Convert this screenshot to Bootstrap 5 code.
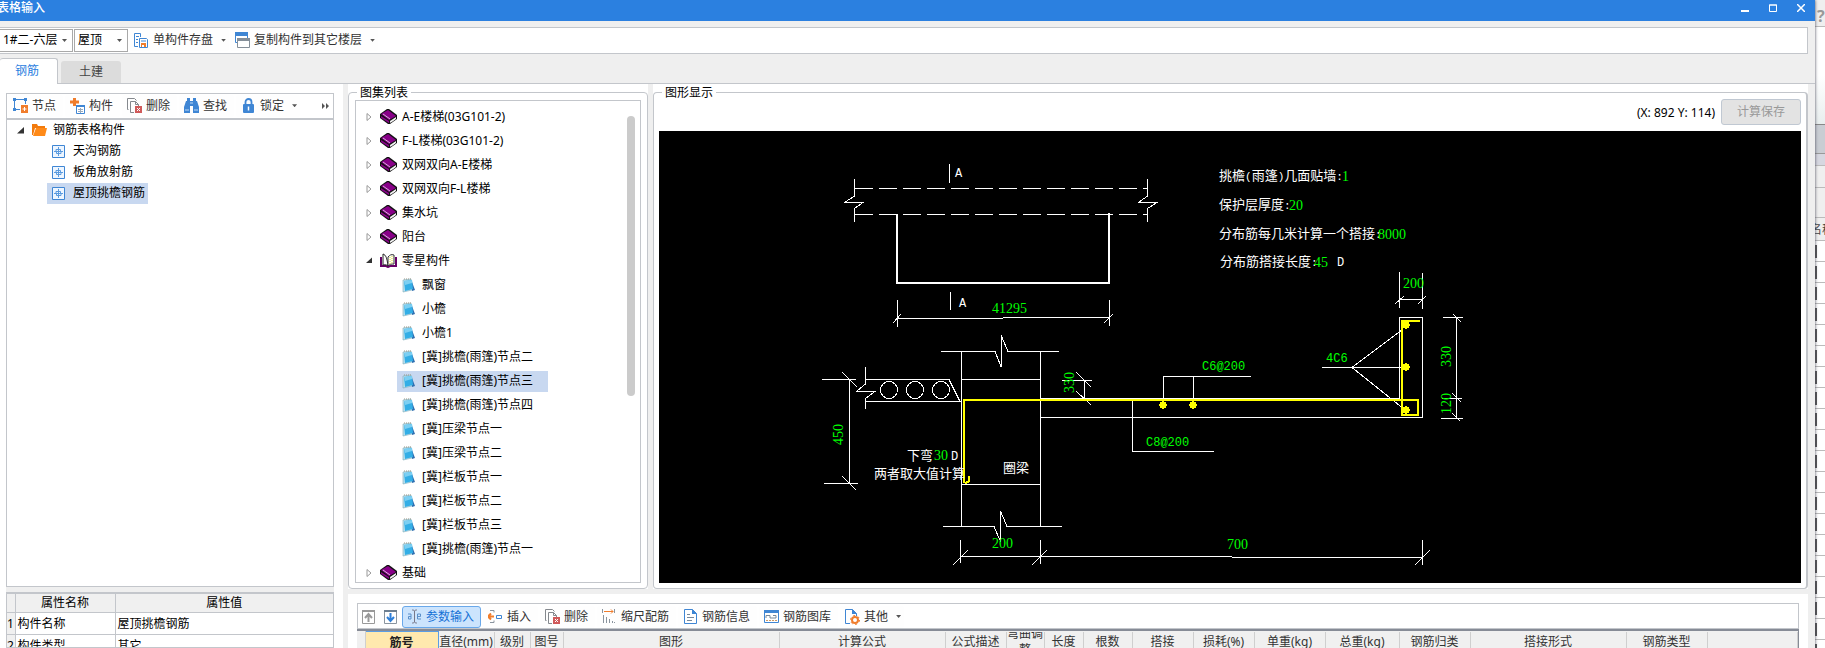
<!DOCTYPE html>
<html lang="zh-CN">
<head>
<meta charset="utf-8">
<meta name="viewport" content="width=device-width, initial-scale=1">
<title>表格输入</title>
<link href="https://cdn.jsdelivr.net/npm/bootstrap@5.3.0/dist/css/bootstrap.min.css" rel="stylesheet">
<style>
:root{--line:#c3c6cb;--face:#efefef;--blue:#2b80e0}
body{height:100vh;overflow:hidden;background:var(--face);color:#000;font:12px/18px "Noto Sans","Noto Sans CJK SC",sans-serif}
svg{display:block;flex:none}
.app-window{background:var(--face);box-shadow:0 0 3px #445;z-index:1}
.title-bar{height:21px;background:var(--blue);color:#fff}
.title-bar h1{font-size:12px;line-height:16px;margin:0 0 0 -3px}
.title-bar button{border:0;background:none;padding:0;width:28px;height:15px;color:#fff}
.tool-strip{height:26px;background:#fff;border:1px solid var(--line)}
.main-strip{height:27px;margin:6px 7px 0 0;border-left:0;gap:1px}
.main-strip select{appearance:none;height:23px;border:1px solid #a9a9a9;background:#fff url("data:image/svg+xml,%3Csvg xmlns='http://www.w3.org/2000/svg' width='5' height='3'%3E%3Cpath fill='%23555' d='M0 0h5L2.500 3z'/%3E%3C/svg%3E") no-repeat right 5px center;padding:0 0 0 3px;font:inherit;color:#000;border-radius:0}
.sel-floor{width:73px;border-left:0!important}.sel-part{width:54px}
.tool-btn{display:flex;align-items:center;gap:4px;height:22px;padding:0 7px 0 5px;border:0;border-radius:3px;background:#fefefe;color:#333;white-space:nowrap}
.tool-btn.has-menu{padding-right:3px}
.tool-btn.is-on{background:#cce4fd;border:1px solid #69a8ea;color:#1672d6;padding:0 6px 0 4px}
.tool-btn.icon-only{width:20px;padding:0;justify-content:center}
.caret{width:5px;height:3px;margin-left:4px;background:#555;clip-path:polygon(0 0,100% 0,50% 100%)}
.tab-row{height:30px;padding-top:4px}
.tab-row button{border:0;border-radius:3px 3px 0 0;font-size:12px}
.tab-on{width:58px;height:26px;background:#fff;color:var(--blue);border-top:1px solid var(--line)!important;border-right:1px solid var(--line)!important;padding:0 3px 0 0}
.tab-off{width:60px;height:22px;margin:3px 0 0 3px;background:#dcdcdc;color:#444;padding:0}
.tab-edge{border-bottom:1px solid var(--line)}
.work{background:#fff;margin-right:7px}
.side{width:343px;padding:9px 9px 0 6px;flex:none}
.side-bar{height:25px;gap:2px;padding-left:1px;border-bottom:0}
.side-tree{border:1px solid var(--line);border-top:2px solid var(--line)}
.tree{list-style:none;margin:0;padding:0}
.tree-row{display:flex;align-items:center;white-space:nowrap}
.side-tree .tree-row{height:21px}
.side-tree .root{padding-left:10px}
.side-tree .leaf{margin-left:40px;width:101px;padding-left:5px;gap:8px}
.picked{background:#c8d8f0}
.bar-h{height:5px;background:var(--face);flex:none}
.bar-v{width:5px;background:var(--face);flex:none}
.props{height:56px;overflow:hidden;border:1px solid var(--line);border-top-width:2px}
.props table,.grid-head table{table-layout:fixed;width:100%;border-collapse:collapse}
.props th,.props td{height:22px;padding:0 2px;border:1px solid var(--line);border-top:0;border-left:0;white-space:nowrap;line-height:18px;font-weight:400}
.props thead th{height:18px;background:#f0f0f0;text-align:center;line-height:18px}
.props tbody th{background:#f0f0f0;padding:0}
.props td:last-child,.props th:last-child{border-right:0}
.groups{background:var(--face);gap:5px;padding-bottom:5px}
.group-cell{background:#fff;padding-top:3px}
fieldset{border:1px solid var(--line);border-radius:4px;height:100%;padding:0 6px 5px 6px;display:flex;flex-direction:column}
fieldset legend{float:none;width:auto;font-size:12px;line-height:12px;margin:0 0 0 2px;padding:0 3px;flex:none}
.atlas{width:300px;flex:none}
.atlas-tree{border:1px solid var(--line);margin-top:1px;padding:4px 0;position:relative;overflow:hidden}
.atlas-tree .tree-row{height:24px;flex:none}
.atlas-tree .book{padding-left:10px}
.atlas-tree .book svg:first-child{margin-right:8px}
.atlas-tree .book span{margin-left:5px}
.atlas-tree .leaf{height:21px;margin:2px 0 1px 41px;width:151px;padding-left:5px;gap:6px}
.thumb{position:absolute;right:5px;top:15px;width:8px;height:280px;border-radius:4px;background:#cbcbcb}
.view-cell fieldset{border-right-width:2px;padding:0 5px 5px 5px}
.view-cell legend{margin-left:3px}
.view-bar{height:32px}
.save-btn{width:80px;height:26px;border:1px solid #c0c8d2;border-radius:3px;background:#e3e3e3;color:#999;margin-left:6px;padding:0}
.canvas{background:#000}
.canvas svg{width:100%;height:100%}
.canvas text{font:13px "Noto Sans CJK SC",sans-serif;fill:#fff;white-space:pre}
.canvas .hw{font:11px "Liberation Mono",monospace}
.canvas .cap{font:12px "Liberation Mono",monospace}
.canvas .num{font:14px "Liberation Serif",serif;fill:#0f0}
.canvas .mix{font:12px "Liberation Mono",monospace;fill:#0f0}
.lower{height:54px;padding:9px 9px 0;overflow:hidden;flex:none}
.lower .tool-strip{padding-top:1px;gap:2px}
.grid-head{border-top:2px solid #868b96;background:#f0f0f0;border-right:1px solid #868b96}
.grid-head th{padding:0;border-right:1px solid #cfcfcf;font-weight:400;color:#333}
.grid-head th div{height:21px;display:flex;align-items:center;justify-content:center;text-align:center;line-height:16px;overflow:hidden}
.grid-head th.key{background:#ffe9ae;font-weight:700;color:#222;border-top:1px solid #5b9de4;border-right-color:#5b9de4}
.behind{width:10px;flex:none;overflow:hidden;color:#444}
.behind .b1{height:27px;border-bottom:1px solid #bbb;font-size:16px;font-weight:700;line-height:32px;color:#999;padding-left:2px}
.behind .b2{height:98px;background:linear-gradient(#fff 50%,#e8eeee);border-bottom:1px solid #888}
.behind .b3{height:29px;background:#c9cdd3;border-bottom:1px solid #999}
.behind .b4{height:12px;background:#d6d7e0;border-bottom:1px solid #bbb}
.behind .b5{height:22px;border-bottom:1px solid #bbb}
.behind .b6{height:30px;border-bottom:1px solid #bbb}
.behind .b7{height:23px;border-bottom:1px solid #bbb;white-space:nowrap;line-height:24px;text-indent:-5px}
.behind .b8{height:21px;background:#fff;border-bottom:1px solid #bbb;padding-top:4px}
.behind .b8 i{display:block;width:2px;height:13px;background:#555}
</style>
</head>
<body class="d-flex">
<svg width="0" height="0" class="position-absolute" aria-hidden="true">
  <symbol id="i-book" viewBox="0 0 17 15"><path d="M0 5 7 0h2l8 6v4l-7 5H8L0 9z" fill="#111"/><path d="m1 5 7-4 8 6-7 4z" fill="#808"/><path d="m1 7 8 5v2L1 9z" fill="#808"/><path d="m10 12 6-4v2l-6 4z" fill="#eee"/><path d="m3 5 7 5M11 13l4-3" stroke="#fff" stroke-width=".7" fill="none"/></symbol>
  <symbol id="i-open" viewBox="0 0 17 15"><path d="M1 4v9h5l2 1 2-1h6V4" fill="none" stroke="#606" stroke-width="2"/><path d="M3 1c3 1 4 4 5 12-2-2-5-1-5-1z" fill="#fff" stroke="#222"/><path d="M8 4c2-2 3-3 6-2v9c-3 0-4 0-6 2z" fill="#fff" stroke="#333"/><path d="M10 4v7M12 3v7" stroke="#dd2" stroke-dasharray="1 1"/></symbol>
  <symbol id="i-note" viewBox="0 0 14 15"><path d="m1 2 8-1 1 11-9 2z" fill="#bfe3ef" stroke="#7aa9bb" stroke-width=".6"/><path d="m10 4 3 8-3 1z" fill="#2f6fb0"/><path d="m2 3 8-1 1 9-8 2z" fill="#33aee6"/><path d="m2 3 8-1v3L3 7z" fill="#7ccff2"/><path d="M2 1h8" stroke="#998" stroke-dasharray="1 1"/></symbol>
  <symbol id="i-shut" viewBox="0 0 5 8"><path d="M.5.5v7l4-3.500z" fill="#fff" stroke="#999"/></symbol>
  <symbol id="i-down" viewBox="0 0 7 7"><path d="M7 0v6.500H0z" fill="#333"/></symbol>
  <symbol id="i-part" viewBox="0 0 13 13"><path d="M.5.5h12v12H.5z" fill="#eef6ff" stroke="#3f86d4"/><path d="M6.500 2v9M2 6.500h9M4 6.500v-2h4.500v2M4.500 6.500v2h4.500v-2" fill="none" stroke="#5b9bdf"/></symbol>
  <symbol id="i-del" viewBox="0 0 15 15"><path d="M1.500 11.500H.5V.5h7l2 2" fill="none" stroke="#85898e"/><path d="M7 14.500H3.500v-11h5l3 3V8M8.500 3.500v3h3" fill="none" stroke="#85898e"/><path d="M8 8h7v7H8z" fill="#d05a5a"/><path d="m10 10 3 3m0-3-3 3" stroke="#fff"/></symbol>
</svg>

<div class="app-window flex-fill d-flex flex-column overflow-hidden" style="min-width:0">
  <header class="title-bar d-flex justify-content-between align-items-start">
    <h1>表格输入</h1>
    <div class="d-flex">
      <button type="button" aria-label="最小化"><svg class="m-auto" width="8" height="8"><path d="M0 6h8v2H0z" fill="#fff"/></svg></button>
      <button type="button" aria-label="最大化"><svg class="m-auto" width="8" height="8"><path d="M.5 1h7v6.500h-7zM0 1h8" fill="none" stroke="#fff"/></svg></button>
      <button type="button" aria-label="关闭"><svg class="m-auto" width="8" height="8"><path d="m0 0 8 8m0-8L0 8" stroke="#fff" stroke-width="1.500"/></svg></button>
    </div>
  </header>

  <div class="tool-strip main-strip d-flex align-items-center flex-shrink-0">
    <select class="sel-floor" aria-label="楼层"><option>1#二-六层</option></select>
    <select class="sel-part" aria-label="部位"><option>屋顶</option></select>
    <button class="tool-btn has-menu" type="button"><svg width="15" height="15"><path d="M4 13.500H.5V.5h6V4M2 3.500h3M2 6.500h2M2 9.500h2" fill="none" stroke="#3f86d4"/><path d="M5.500 5.500h7l1 1v8h-8z" fill="#fff" stroke="#3f86d4"/><path d="M7 8h5" stroke="#3f86d4"/><path d="M7 10h5v4H7z" fill="#f07d2c"/><path d="M8 12h2v2H8z" fill="#fff"/></svg>单构件存盘<span class="caret"></span></button>
    <button class="tool-btn has-menu" type="button"><svg width="15" height="16"><path d="M.5 1.500h12v9H.5z" fill="#fff" stroke="#3f86d4"/><path d="M0 0h13v4H0z" fill="#3f86d4"/><path d="M2.500 6.500h12v9h-12z" fill="#fff" stroke="#858f99"/><path d="M2 6h13v3H2z" fill="#858f99"/></svg>复制构件到其它楼层<span class="caret"></span></button>
  </div>

  <div class="tab-row d-flex flex-shrink-0" role="tablist">
    <button class="tab-on" role="tab" aria-selected="true" type="button">钢筋</button>
    <div class="flex-fill tab-edge"><button class="tab-off" role="tab" type="button">土建</button></div>
  </div>

  <main class="work flex-fill d-flex" style="min-height:0">
    <section class="side d-flex flex-column">
      <div class="tool-strip side-bar d-flex align-items-center flex-shrink-0">
        <button class="tool-btn" type="button"><svg width="15" height="15"><path d="M1.500 1.500h11v10h-11z" fill="none" stroke="#3f86d4"/><path d="M0 0h3v3H0zM11 0h3v3h-3zM0 10h3v3H0z" fill="#3f86d4"/><path d="M7 6h8v9H7z" fill="#fff"/><path d="M8 7h7v8H8z" fill="#f07d2c"/><path d="M11.500 9v4m-2-2h4" stroke="#fff"/></svg>节点</button>
        <button class="tool-btn" type="button"><svg width="15" height="16"><path d="M3 0h3v2.500h3v3H6V8H3V5.500H0v-3h3z" fill="#f07d2c"/><path d="M6.500 7.500h8v8h-8z" fill="#fff" stroke="#3f86d4"/><path d="M6 7h9v2H6z" fill="#3f86d4"/><path d="M8 11.500h5M8 13.500h5M10.500 10v5" stroke="#9ab"/></svg>构件</button>
        <button class="tool-btn" type="button"><svg width="15" height="15"><use href="#i-del"/></svg>删除</button>
        <button class="tool-btn" type="button"><svg width="15" height="15"><path d="M3 0h3v3h3V0h3v3h1l2 6v6H9V8H6v7H0V9l2-6h1z" fill="#3f86d4"/><path d="M1 12h4m5 0h4M6 5h3" stroke="#bcd8f5"/></svg>查找</button>
        <button class="tool-btn has-menu" type="button"><svg width="15" height="15"><path d="M4.500 6V4a3 3 0 0 1 6 0v2" fill="none" stroke="#3f86d4" stroke-width="1.800"/><rect x="2" y="6" width="11" height="9" rx="1" fill="#3f86d4"/><path d="M7.500 8.500v4" stroke="#fff" stroke-width="1.500"/></svg>锁定<span class="caret"></span></button>
        <svg class="ms-auto me-1" width="7" height="6"><path d="M0 0v6l3-3zM4 0v6l3-3z" fill="#555"/></svg>
      </div>
      <div class="side-tree flex-fill">
        <ul class="tree">
          <li><div class="tree-row root"><svg width="7" height="7"><use href="#i-down"/></svg><svg style="margin:0 6px 0 8px" width="15" height="12"><path d="M0 0h5l1 2h7v2H3L1 11H0z" fill="#f27a0c"/><path d="M4 4h11l-2 8H1z" fill="#ff8a18"/></svg>钢筋表格构件</div>
            <ul class="tree">
              <li class="tree-row leaf"><svg width="13" height="13"><use href="#i-part"/></svg>天沟钢筋</li>
              <li class="tree-row leaf"><svg width="13" height="13"><use href="#i-part"/></svg>板角放射筋</li>
              <li class="tree-row leaf picked"><svg width="13" height="13"><use href="#i-part"/></svg>屋顶挑檐钢筋</li>
            </ul></li>
        </ul>
      </div>
      <div class="bar-h"></div>
      <div class="props flex-shrink-0">
        <table>
          <colgroup><col style="width:8px"><col style="width:100px"><col></colgroup>
          <thead><tr><th></th><th>属性名称</th><th>属性值</th></tr></thead>
          <tbody>
            <tr><th>1</th><td>构件名称</td><td>屋顶挑檐钢筋</td></tr>
            <tr><th>2</th><td>构件类型</td><td>其它</td></tr>
          </tbody>
        </table>
      </div>
    </section>
    <div class="bar-v"></div>
    <section class="flex-fill d-flex flex-column" style="min-width:0">
      <div class="groups flex-fill d-flex" style="min-height:0">
        <div class="group-cell atlas"><fieldset><legend>图集列表</legend>
          <div class="atlas-tree flex-fill">
            <ul class="tree d-flex flex-column" id="atlas"></ul>
            <div class="thumb"></div>
          </div>
        </fieldset></div>
        <div class="group-cell view-cell flex-fill" style="min-width:0"><fieldset><legend>图形显示</legend>
          <div class="view-bar d-flex justify-content-end align-items-start flex-shrink-0">
            <output style="padding-top:5px">(X: 892 Y: 114)</output>
            <button class="save-btn" type="button" disabled>计算保存</button>
          </div>
          <div class="canvas flex-fill" style="min-height:0">
<svg viewBox="659 131 1142 452" preserveAspectRatio="xMinYMin meet" role="img" aria-label="挑檐(雨篷)节点三">
  <g fill="none" stroke="#fff" shape-rendering="crispEdges">
    <!-- plan view -->
    <path d="M854.500 188.500H1148M854.500 214.500H1148" stroke-dasharray="18 6"/>
    <path d="M854.500 179v17l-10 6.500h18.500l-8.500 6V222M1147.500 179v17l-9 6.500h18.500l-9.500 6V222M949.500 164v19M950.500 292v18"/>
    <path d="M897 214v69h212v-70" stroke-width="2"/>
    <path d="M897.500 300v27M1109.500 300v26M897 318.500h106M1003 317.500h106M893 323l8-9M1104 323l9-9"/>
    <!-- hollow slab -->
    <path d="M822 379.500h34M824 483.500h34M849.500 379v105M842 372l15 15M842 476l14 14"/>
    <path d="M865.500 367v17l-9 7.500h18.500l-9.500 7V409M865 379.500h84l11 22M865 401.500h97"/>
    <circle cx="889" cy="390" r="8.500"/><circle cx="915" cy="390" r="8.500"/><circle cx="941" cy="390" r="8.500"/>
    <!-- ring beam -->
    <path d="M941 351.500h54l6 15V335l7 16.500h51M943 526.500h51l6.500 15V511l6.500 15.500h55M961.500 351v175M1040.500 351v175M961 379.500h79M961 484.500h79"/>
    <!-- cantilever -->
    <path d="M1040 398.500h359.500v-81h23v100H1040"/>
    <path d="M1062 380.500h30M1084.500 380v18M1076 372l15 15M1076 391l15 14"/>
    <path d="M1163.500 404v-27.500H1251M1193.500 376v28M1132.500 400v51.500H1214"/>
    <path d="M1322 367.500h80M1402 330l-50 37.500 50 40"/>
    <path d="M1399.500 272v36M1422.500 273v36M1399 299.500h24M1395 304l9-8M1418 304l8-8"/>
    <path d="M1456.500 317v102M1443 317.500h20M1442 398.500h20M1441 418.500h22M1453 314l8 8M1452 393l9 9M1452 413l8 8"/>
    <path d="M960.500 540v23M1040.500 540v24M1422.500 540v25M960 556.500h272M1232 557.500h190M953 565l15-15M1032 565l15-15M1415 565l15-15"/>
    <path d="M1420 321h-18v94h16v-15H964v82l2 1 3-2v-5" stroke="#ff0" stroke-width="2"/>
  </g>
  <g fill="#ff0">
    <path id="bar" d="M1405 321h2v1h2v2h1v2h-1v2h-2v1h-2v-1h-2v-2h-1v-2h1v-2h2z"/>
    <use href="#bar" y="42"/><use href="#bar" y="85"/><use href="#bar" x="-243" y="80"/><use href="#bar" x="-213" y="80"/>
  </g>
  <text class="cap" x="955" y="177">A</text><text class="cap" x="959" y="307">A</text>
  <text x="1219" y="180">挑檐<tspan class="hw">(</tspan>雨篷<tspan class="hw">)</tspan>几面贴墙<tspan class="hw">:</tspan></text><text class="num" x="1342" y="181">1</text>
  <text x="1219" y="209">保护层厚度<tspan class="hw">:</tspan></text><text class="num" x="1289" y="210">20</text>
  <text x="1219" y="238">分布筋每几米计算一个搭接<tspan class="hw">:</tspan></text><text class="num" x="1378" y="239">8000</text>
  <text x="1220" y="266">分布筋搭接长度<tspan class="hw">:</tspan></text><text class="num" x="1314" y="267">45</text><text class="cap" x="1337" y="266">D</text>
  <text x="907" y="460">下弯</text><text class="num" x="934" y="460">30</text><text class="cap" x="951" y="460">D</text>
  <text x="874" y="478">两者取大值计算</text><text x="1003" y="472">圈梁</text>
  <text class="num" x="992" y="313">41295</text><text class="num" x="1403" y="288">200</text><text class="num" x="992" y="548">200</text><text class="num" x="1227" y="549">700</text>
  <text class="mix" x="1202" y="370">C6@200</text><text class="mix" x="1146" y="446">C8@200</text><text class="mix" x="1326" y="362">4C6</text>
  <text class="num" transform="translate(843 445) rotate(-90)">450</text>
  <text class="num" transform="translate(1074 393) rotate(-90)">330</text>
  <text class="num" transform="translate(1451 367) rotate(-90)">330</text>
  <text class="num" transform="translate(1451 414) rotate(-90)">120</text>
</svg>
          </div>
        </fieldset></div>
      </div>
      <div class="lower">
        <div class="tool-strip d-flex align-items-center">
          <button class="tool-btn icon-only" type="button" aria-label="上移"><svg width="13" height="14"><path d="M.5.5h12v13H.5z" fill="#fff" stroke="#999"/><path d="M0 0h13v2H0z" fill="#999"/><path d="M6.500 12V5M3 8l3.500-4L10 8" fill="none" stroke="#999" stroke-width="2"/></svg></button>
          <button class="tool-btn icon-only" type="button" aria-label="下移"><svg width="13" height="14"><path d="M.5.5h12v13H.5z" fill="#fff" stroke="#8a949e"/><path d="M0 0h13v2H0z" fill="#6d7f91"/><path d="M6.500 3v7M3 7l3.500 4L10 7" fill="none" stroke="#2f7fd8" stroke-width="2"/></svg></button>
          <button class="tool-btn is-on" type="button"><svg width="15" height="15" fill="none" stroke="#5b8fc9"><path d="M1 5h3v5H1.500V7.500H4M10.500 7.500h3V5h-3v5H14"/><path d="M5 1c1 0 2 0 2.500 1C8 1 9 1 10 1M7.500 2v11M5 14c1 0 2 0 2.500-1 .5 1 1.500 1 2.500 1" stroke="#778"/></svg>参数输入</button>
          <button class="tool-btn" type="button"><svg width="15" height="15"><path d="M2 1.500h4v2M2 13.500h4v-2" fill="none" stroke="#8a949e"/><path d="M0 7.500h6M3 4.500l-3 3 3 3" fill="none" stroke="#f07d2c" stroke-width="2"/><path d="M8.500 6.500h5v3h-5z" fill="#fff" stroke="#3f86d4"/></svg>插入</button>
          <button class="tool-btn" type="button"><svg width="15" height="15"><use href="#i-del"/></svg>删除</button>
          <button class="tool-btn" type="button"><svg width="15" height="15"><path d="M2 2.500h9M9 .5l2 2-2 2" fill="none" stroke="#f07d2c"/><path d="M.5 0v4M12.500 0v4M1.500 6v8M4.500 8v6M7.500 10v4M10.500 12v2M12.500 13v1" stroke="#8a949e"/></svg>缩尺配筋</button>
          <button class="tool-btn" type="button"><svg width="15" height="15"><path d="M1.500.5h8l4 4v10h-12z" fill="#fff" stroke="#3f86d4"/><path d="M9 0v5h5z" fill="#3f86d4"/><path d="M4 5.500h3M4 8.500h7M4 11.500h5" stroke="#789"/></svg>钢筋信息</button>
          <button class="tool-btn" type="button"><svg width="15" height="15"><path d="M.5 1.500h14v12H.5z" fill="#fff" stroke="#3f86d4"/><path d="M0 1h15v3H0z" fill="#3f86d4"/><path d="M2 9V6.500h4V9h6V6.500H9" fill="none" stroke="#789"/><path d="M2 11.500h11" stroke="#c96" stroke-dasharray="2 1"/></svg>钢筋图库</button>
          <button class="tool-btn has-menu" type="button"><svg width="15" height="16"><path d="M5 14.500H.5V.5h7l4 4V7" fill="none" stroke="#3f86d4"/><path d="M7 0v5h5z" fill="#3f86d4"/><circle cx="10" cy="11" r="3" fill="#fff" stroke="#f07d2c" stroke-width="2"/><circle cx="10" cy="11" r="4.500" fill="none" stroke="#f07d2c" stroke-dasharray="2 2.700"/></svg>其他<span class="caret"></span></button>
        </div>
        <div class="grid-head"><table>
          <colgroup><col style="width:8px"><col style="width:73px"><col style="width:56px"><col style="width:36px"><col style="width:33px"><col style="width:216px"><col style="width:166px"><col style="width:61px"><col style="width:38px"><col style="width:39px"><col style="width:49px"><col style="width:61px"><col style="width:61px"><col style="width:71px"><col style="width:74px"><col style="width:71px"><col style="width:156px"><col style="width:81px"><col></colgroup>
          <thead><tr><th></th><th class="key"><div>筋号</div></th><th><div>直径(mm)</div></th><th><div>级别</div></th><th><div>图号</div></th><th><div>图形</div></th><th><div>计算公式</div></th><th><div>公式描述</div></th><th><div>弯曲调整</div></th><th><div>长度</div></th><th><div>根数</div></th><th><div>搭接</div></th><th><div>损耗(%)</div></th><th><div>单重(kg)</div></th><th><div>总重(kg)</div></th><th><div>钢筋归类</div></th><th><div>搭接形式</div></th><th><div>钢筋类型</div></th><th></th></tr></thead>
        </table></div>
      </div>
    </section>
  </main>
</div>

<aside class="behind" id="behind">
  <div class="b1">?</div><div class="b2"></div><div class="b3"></div><div class="b4"></div><div class="b5"></div><div class="b6"></div><div class="b7">名称</div>
</aside>

<script src="https://cdn.jsdelivr.net/npm/bootstrap@5.3.0/dist/js/bootstrap.bundle.min.js"></script>
<script>
const icon = (id, w, h) => `<svg width="${w}" height="${h}"><use href="#${id}"/></svg>`;
const book = (name, open) => `<li class="tree-row book">${open ? icon('i-down', 6, 7) : icon('i-shut', 6, 8)}${icon(open ? 'i-open' : 'i-book', 17, 15)}<span>${name}</span></li>`;
const leaf = (name) => `<li class="tree-row leaf${name.endsWith('节点三') && name.includes('挑檐') ? ' picked' : ''}">${icon('i-note', 14, 15)}${name}</li>`;
document.getElementById('atlas').innerHTML =
  ['A-E楼梯(03G101-2)', 'F-L楼梯(03G101-2)', '双网双向A-E楼梯', '双网双向F-L楼梯', '集水坑', '阳台'].map(n => book(n)).join('') +
  book('零星构件', true) +
  ['飘窗', '小檐', '小檐1', '[冀]挑檐(雨篷)节点二', '[冀]挑檐(雨篷)节点三', '[冀]挑檐(雨篷)节点四', '[冀]压梁节点一', '[冀]压梁节点二', '[冀]栏板节点一', '[冀]栏板节点二', '[冀]栏板节点三', '[冀]挑檐(雨篷)节点一'].map(leaf).join('') +
  book('基础');
document.getElementById('behind').insertAdjacentHTML('beforeend', '<div class="b8"><i></i></div>'.repeat(20));
</script>
</body>
</html>
